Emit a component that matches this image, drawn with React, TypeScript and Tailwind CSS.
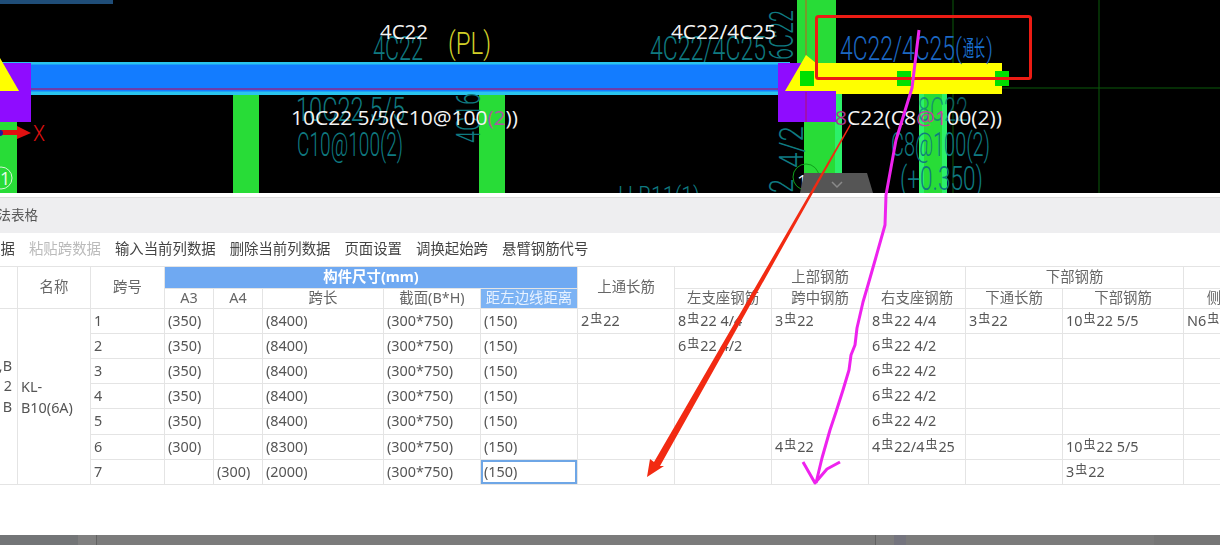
import React from "react";

const R = () => <span className="relative -top-[3px] mx-[1px] text-[12px] leading-none">虫</span>;

const c = (a: string, b: string) => (
  <>
    {a}
    <R />
    {b}
  </>
);

const td = "border border-[#e4e4e4] px-[3px] pb-[0.5px] align-middle whitespace-nowrap overflow-hidden";
const th = "border border-[#e4e4e4] font-normal text-center whitespace-nowrap overflow-hidden text-[#666]";

const rows: {
  n: string; a3: string; a4: string; len: string;
  top?: React.ReactNode; l?: React.ReactNode; m?: React.ReactNode; r?: React.ReactNode;
  bt?: React.ReactNode; b?: React.ReactNode; side?: React.ReactNode; h: string;
}[] = [
  { n: "1", a3: "(350)", a4: "", len: "(8400)", top: c("2", "22"), l: c("8", "22 4/4"), m: c("3", "22"), r: c("8", "22 4/4"), bt: c("3", "22"), b: c("10", "22 5/5"), side: c("N6", "16"), h: "h-[25px]" },
  { n: "2", a3: "(350)", a4: "", len: "(8400)", l: c("6", "22 4/2"), r: c("6", "22 4/2"), h: "h-[25px]" },
  { n: "3", a3: "(350)", a4: "", len: "(8400)", r: c("6", "22 4/2"), h: "h-[25px]" },
  { n: "4", a3: "(350)", a4: "", len: "(8400)", r: c("6", "22 4/2"), h: "h-[25px]" },
  { n: "5", a3: "(350)", a4: "", len: "(8400)", r: c("6", "22 4/2"), h: "h-[26px]" },
  { n: "6", a3: "(300)", a4: "", len: "(8300)", m: c("4", "22"), r: <>{c("4", "22/4")}<R />25</>, b: c("10", "22 5/5"), h: "h-[25px]" },
  { n: "7", a3: "", a4: "(300)", len: "(2000)", b: c("3", "22"), h: "h-[25px]" },
];

function Cad() {
  const teal = "#0f7a80";
  const label = "font-['Open_Sans','Noto_Sans',sans-serif]";
  const thin = "font-['Roboto',sans-serif] font-light";
  return (
    <svg width="1220" height="193" viewBox="0 0 1220 193" className="block">
      <rect width="1220" height="193" fill="#000" />
      {/* top-left strip */}
      <rect x="0" y="0" width="113" height="4" fill="#1f4d78" />
      {/* dim axis lines */}
      <line x1="953" y1="0" x2="953" y2="193" stroke="#0a5a0a" />
      <line x1="1099" y1="0" x2="1099" y2="193" stroke="#0a5a0a" />
      <line x1="1002" y1="88" x2="1220" y2="88" stroke="#0a5a0a" />
      {/* columns */}
      <rect x="0" y="120" width="17" height="73" fill="#28dc37" />
      <rect x="233" y="94" width="26" height="99" fill="#28dc37" />
      <rect x="479" y="94" width="26" height="99" fill="#28dc37" />
      <rect x="797" y="0" width="39" height="66" fill="#28dc37" />
      <rect x="804" y="92" width="38" height="101" fill="#2cf06a" />
      <rect x="804" y="92" width="31" height="101" fill="#28dc37" />
      <rect x="919" y="94" width="28" height="99" fill="#2cf06a" />
      <rect x="924" y="94" width="18" height="99" fill="#28dc37" />
      {/* beam */}
      <rect x="0" y="62" width="790" height="33" fill="#2ac4ee" />
      <rect x="0" y="64.5" width="790" height="27" fill="#137cff" />
      <line x1="0" y1="89" x2="790" y2="89" stroke="#8e2a8e" strokeWidth="1.5" />
      {/* supports */}
      <rect x="0" y="63" width="31" height="59" fill="#8f0cff" />
      <rect x="778" y="63" width="58" height="59" fill="#8f0cff" />
      <line x1="806" y1="92" x2="806" y2="122" stroke="#b0106a" />
      {/* yellow */}
      <polygon points="0,58 19,91 0,91" fill="#ffff00" />
      <polygon points="806,55 816,63 1002,63 1002,94 836,94 836,91 785,91" fill="#ffff00" />
      <rect x="836" y="91" width="166" height="3" fill="#ffff00" />
      <line x1="806" y1="0" x2="806" y2="55" stroke="#c85a20" />
      <rect x="800" y="71" width="14" height="15" fill="#00e000" />
      <rect x="897" y="71" width="14" height="15" fill="#00e000" />
      <rect x="995" y="71" width="14" height="15" fill="#00e000" />
      {/* axis X */}
      <rect x="0" y="130" width="18" height="5" fill="#e01010" />
      <polygon points="17,126 31,133 17,139" fill="#e01010" />
      <circle cx="0" cy="133" r="3" fill="#1a1aa0" />
      <text x="33" y="141" fontSize="22" fill="#e01010" className={thin} textLength="12" lengthAdjust="spacingAndGlyphs">X</text>
      {/* axis circles */}
      <circle cx="1" cy="178" r="11" fill="none" stroke="#d8f5d8" strokeWidth="1" />
      <text x="0" y="185" fontSize="18" fill="#e8ffe8" className={label}>1</text>
      <circle cx="806" cy="177" r="13" fill="none" stroke="#0ea01a" />
      {/* teal CAD text */}
      <g fill={teal} className={thin}>
        <text x="373" y="60" fontSize="33" textLength="50" lengthAdjust="spacingAndGlyphs">4C22</text>
        <text x="296" y="121" fontSize="33" textLength="109" lengthAdjust="spacingAndGlyphs">10C22 5/5</text>
        <text x="297" y="156" fontSize="33" textLength="106" lengthAdjust="spacingAndGlyphs">C10@100(2)</text>
        <text x="0" y="0" fontSize="33" textLength="50" lengthAdjust="spacingAndGlyphs" transform="translate(480 143) rotate(-90)">4C16</text>
        <text x="650" y="60" fontSize="33" textLength="116" lengthAdjust="spacingAndGlyphs">4C22/4C25</text>
        <text x="0" y="0" fontSize="33" textLength="50" lengthAdjust="spacingAndGlyphs" transform="translate(793 60) rotate(-90)">6C22</text>
        <text x="0" y="0" fontSize="33" textLength="42" lengthAdjust="spacingAndGlyphs" transform="translate(803 168) rotate(-90)">4/2</text>
        <text x="0" y="0" fontSize="33" textLength="14" lengthAdjust="spacingAndGlyphs" transform="translate(793 193) rotate(-90)">2</text>
        <text x="918" y="121" fontSize="33" textLength="50" lengthAdjust="spacingAndGlyphs" opacity="0.75">8C22</text>
        <text x="891" y="156" fontSize="33" textLength="99" lengthAdjust="spacingAndGlyphs">C8@100(2)</text>
        <text x="900" y="190" fontSize="33" textLength="83" lengthAdjust="spacingAndGlyphs">(+0.350)</text>
        <text x="618" y="205" fontSize="26" textLength="82" lengthAdjust="spacingAndGlyphs">H  B11(1)</text>
      </g>
      <text x="448" y="54" fontSize="31" fill="#d2d028" className={thin} textLength="43" lengthAdjust="spacingAndGlyphs">(PL)</text>
      <g className={thin}>
        <text x="840" y="60" fontSize="33" fill="#1c68c4" textLength="115" lengthAdjust="spacingAndGlyphs">4C22/4C25</text>
        <text x="955" y="58" fontSize="28" fill="#1c68c4" textLength="7" lengthAdjust="spacingAndGlyphs">(</text>
        <text x="986" y="58" fontSize="28" fill="#1c68c4" textLength="7" lengthAdjust="spacingAndGlyphs">)</text>
      </g>
      <text x="963" y="56" fontSize="22" fill="#1a6fd0" className="font-['Noto_Sans_CJK_SC',sans-serif]" textLength="22" lengthAdjust="spacingAndGlyphs">通长</text>
      {/* white labels */}
      <g fill="#f4f4f4" fontSize="20" className={label}>
        <text x="380" y="39" textLength="48" lengthAdjust="spacingAndGlyphs">4C22</text>
        <text x="671" y="39" textLength="105" lengthAdjust="spacingAndGlyphs">4C22/4C25</text>
        <text x="291" y="125" textLength="227" lengthAdjust="spacingAndGlyphs">
          10C22 5/5(C10@100<tspan fill="#a85aa0">(2</tspan>))
        </text>
        <text x="835" y="125" textLength="167" lengthAdjust="spacingAndGlyphs">
          <tspan fill="#a83a90">8</tspan>C22(C8<tspan fill="#c040a0">@1</tspan>00(2))
        </text>
        <text x="797" y="188" fontSize="19">1</text>
      </g>
      {/* red note box */}
      <rect x="816.5" y="16.5" width="214" height="62" rx="2" fill="none" stroke="#ec1c14" strokeWidth="3" />
      {/* collapse tab */}
      <polygon points="804,173 867,173 873,193 800,193" fill="#555555" />
      <polyline points="832,182 837,187 842,182" fill="none" stroke="#8a8a8a" strokeWidth="1.5" />
    </svg>
  );
}

function Arrows() {
  return (
    <svg width="1220" height="545" viewBox="0 0 1220 545" className="absolute left-0 top-0 pointer-events-none">
      <polygon points="850,124 851,125 660,466 664,466 647,477 650,459 654,462" fill="#f22a12" />
      <polyline
        points="919,30 912,88 896,140 886,195 885,225 876,257 868,285 863,302 857,328 855,345 851,355 849,370 843,390 836,412 830,430 822,458 816,483"
        fill="none"
        stroke="#ee22ee"
        strokeWidth="3"
        strokeLinejoin="round"
      />
      <polyline points="803,462 815,483 827,469 840,462" fill="none" stroke="#ee22ee" strokeWidth="3" strokeLinejoin="round" />
    </svg>
  );
}

export default function App() {
  return (
    <div className="relative h-[545px] w-[1220px] overflow-hidden bg-white font-['Noto_Sans','Noto_Sans_CJK_SC',sans-serif] text-[14.4px] leading-none text-[#555]">
      <div className="flex h-[545px] flex-col blur-[0.35px]">
        <Cad />
        <div className="h-[5px] border-b border-[#dcdcdc] bg-white" />
        <div className="flex h-[35px] items-center bg-[#eeeef0] text-[#555]">
          <span className="-ml-[16px] text-[13.5px] whitespace-nowrap">平法表格</span>
        </div>
        <div className="flex h-[33px] items-center gap-[14px] whitespace-nowrap text-[#444]">
          <span className="-ml-[57px]">复制跨数据</span>
          <span className="text-[#bbb]">粘贴跨数据</span>
          <span>输入当前列数据</span>
          <span>删除当前列数据</span>
          <span>页面设置</span>
          <span>调换起始跨</span>
          <span>悬臂钢筋代号</span>
        </div>
        <div className="h-[269px] overflow-hidden">
          <table className="-ml-[43px] w-[1330px] table-fixed border-collapse">
            <colgroup>
              <col className="w-[60px]" />
              <col className="w-[73px]" />
              <col className="w-[74px]" />
              <col className="w-[49px]" />
              <col className="w-[49px]" />
              <col className="w-[121px]" />
              <col className="w-[97px]" />
              <col className="w-[97px]" />
              <col className="w-[97px]" />
              <col className="w-[97px]" />
              <col className="w-[97px]" />
              <col className="w-[97px]" />
              <col className="w-[97px]" />
              <col className="w-[121px]" />
              <col className="w-[104px]" />
            </colgroup>
            <thead>
              <tr className="h-[22px]">
                <th className={th} rowSpan={2}></th>
                <th className={th} rowSpan={2}>名称</th>
                <th className={th} rowSpan={2}>跨号</th>
                <th className="border border-[#e4e4e4] bg-[#6fa9f2] text-center font-bold text-white" colSpan={5}>构件尺寸(mm)</th>
                <th className={th} rowSpan={2}>上通长筋</th>
                <th className={th} colSpan={3}>上部钢筋</th>
                <th className={th} colSpan={2}>下部钢筋</th>
                <th className={th}></th>
              </tr>
              <tr className="h-[20px]">
                <th className={th}>A3</th>
                <th className={th}>A4</th>
                <th className={th}>跨长</th>
                <th className={th}>截面(B*H)</th>
                <th className="border border-[#e4e4e4] bg-[#7cb3f4] text-center font-normal whitespace-nowrap text-[#e8f2ff]">距左边线距离</th>
                <th className={th}>左支座钢筋</th>
                <th className={th}>跨中钢筋</th>
                <th className={th}>右支座钢筋</th>
                <th className={th}>下通长筋</th>
                <th className={th}>下部钢筋</th>
                <th className={th}>侧面纵筋</th>
              </tr>
            </thead>
            <tbody>
              {rows.map((r, i) => (
                <tr key={r.n} className={r.h}>
                  {i === 0 && (
                    <>
                      <td className="border border-[#e4e4e4] pr-[5px] text-right align-middle leading-[20.5px]" rowSpan={7}>
                        ,B<br />2<br />B<br />&nbsp;
                      </td>
                      <td className="border border-[#e4e4e4] px-[3px] align-middle leading-[21px]" rowSpan={7}>
                        KL-<br />B10(6A)
                      </td>
                    </>
                  )}
                  <td className={td}>{r.n}</td>
                  <td className={td}>{r.a3}</td>
                  <td className={td}>{r.a4}</td>
                  <td className={td}>{r.len}</td>
                  <td className={td}>(300*750)</td>
                  <td className={i === 6 ? `${td} relative` : td}>
                    (150)
                    {i === 6 && (
                      <>
                        <span className="absolute inset-0 border-2 border-[#6ea6e6]" />
                        <span className="absolute right-[-2px] bottom-[-2px] h-[4px] w-[4px] bg-[#6ea6e6]" />
                      </>
                    )}
                  </td>
                  <td className={td}>{r.top}</td>
                  <td className={td}>{r.l}</td>
                  <td className={td}>{r.m}</td>
                  <td className={td}>{r.r}</td>
                  <td className={td}>{r.bt}</td>
                  <td className={td}>{r.b}</td>
                  <td className={td}>{r.side}</td>
                </tr>
              ))}
            </tbody>
          </table>
        </div>
        <div className="flex h-[10px] bg-[#7b7b7b]">
          <div className="w-[78px] bg-[#737577]" />
          <div className="w-[18px] bg-[#808080]" />
          <div className="w-[1px] bg-[#626262]" />
          <div className="w-[778px]" />
          <div className="w-[1px] bg-[#626262]" />
          <div className="w-[18px] bg-[#7e7e7e]" />
          <div className="w-[12px] bg-[#74747e]" />
          <div className="w-[248px]" />
          <div className="flex-1 bg-[#767676]" />
        </div>
      </div>
      <Arrows />
    </div>
  );
}
